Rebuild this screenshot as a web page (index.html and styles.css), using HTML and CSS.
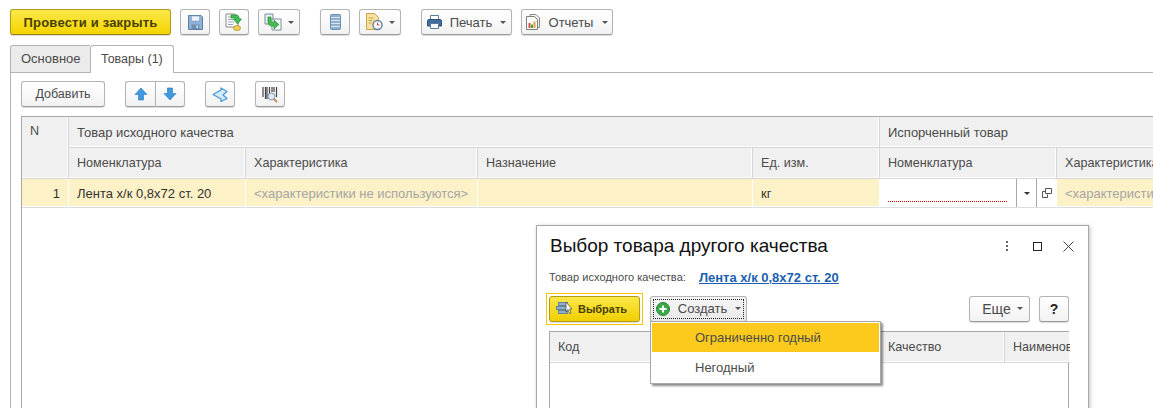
FILE: index.html
```html
<!DOCTYPE html>
<html lang="ru">
<head>
    <meta charset="UTF-8">
    <title>Товары</title>
    <link rel="stylesheet" href="styles.css">
</head>
<body>

<div class="toolbar">
    <button class="btn btn-main">Провести и закрыть</button>
    <button class="btn btn-icon">
        <svg width="15" height="15" viewBox="0 0 15 15"><path d="M.5.500h12.500l1.500 1.500v12.500H.5z" fill="#8db3dc" stroke="#5c7fa3"/><path d="M3.500 1h8v5h-8z" fill="#eef3f8" stroke="#7c9abb" stroke-width=".6"/><path d="M3.500 9.500h8V14h-8z" fill="#6e8cab"/><path d="M8.500 10.500h1.500V13H8.500z" fill="#dfe7ef"/></svg>
    </button>
    <button class="btn btn-icon">
        <svg width="18" height="18" viewBox="0 0 18 18"><path d="M1 1h9l3 3v10H1z" fill="#fff" stroke="#8a8a8a"/><path d="M3 4h5M3 6.500h6M3 9h6M3 11.500h5" stroke="#8fa3b8"/><ellipse cx="12" cy="15" rx="3.500" ry="2.500" fill="#f2cf55" stroke="#b48f20" stroke-width=".8"/><path d="M6 2h5c2 0 3 1 3 3v1h2.500L12.500 11 8.500 6H11V5H6z" fill="#3fbf55" stroke="#1f8a30" stroke-width=".7"/></svg>
    </button>
    <button class="btn btn-icon-drop">
        <svg width="18" height="18" viewBox="0 0 18 18"><path d="M1 1h8v10H1z" fill="#e9eef3" stroke="#7b8b9b"/><path d="M8 6h9v11H8z" fill="#fff" stroke="#7b8b9b"/><path d="M4 4h3v4c0 1 .5 1.500 1.500 1.500H10V7l5 4.500-5 4.500v-3H8c-2.500 0-4-1.500-4-4z" fill="#45bf55" stroke="#1f8a30" stroke-width=".7"/></svg>
        <span class="caret"></span>
    </button>
    <button class="btn btn-icon gap-left">
        <svg width="11" height="16" viewBox="0 0 11 16"><rect x=".5" y=".5" width="10" height="15" rx="1" fill="#8eb0cf" stroke="#6b8fb0"/><path d="M1 3.500h9M1 6.500h9M1 9.500h9M1 12.500h9" stroke="#dbe6f0"/></svg>
    </button>
    <button class="btn btn-icon-drop">
        <svg width="17" height="18" viewBox="0 0 17 18"><path d="M.5.500h8l4 4v12h-12z" fill="#f7e2a4" stroke="#c9a34a"/><path d="M2.500 5h5M2.500 7.500h4M2.500 10h3" stroke="#c9a34a"/><circle cx="11.500" cy="12" r="4.500" fill="#fff" stroke="#5b7fa6" stroke-width="1.400"/><path d="M11.500 9.500V12h2" fill="none" stroke="#d04040"/></svg>
        <span class="caret"></span>
    </button>
    <button class="btn btn-text btn-print gap-left">
        <svg width="15" height="14" viewBox="0 0 15 14"><path d="M3.500.5h8v4h-8z" fill="#fff" stroke="#5d7a98"/><path d="M.5 6c0-1 .5-1.500 1.500-1.500h11c1 0 1.500.5 1.500 1.500v5h-14z" fill="#3f6f9f" stroke="#2f5478"/><path d="M3.500 8.500h8v5h-8z" fill="#fff" stroke="#5d7a98"/></svg>
        <span>Печать</span>
        <span class="caret"></span>
    </button>
    <button class="btn btn-text btn-reports">
        <svg width="14" height="16" viewBox="0 0 14 16"><path d="M4 .5h6l3.500 3.500v9.500H4z" fill="#f2f2f2" stroke="#8a8a8a"/><path d="M.5 2.500h8l3 3v10h-11z" fill="#fff" stroke="#7c7c7c"/><path d="M2.500 9h2v5h-2z" fill="#d04a3c"/><path d="M5 10.500h2V14H5z" fill="#3fa34d"/><path d="M7.500 7.500h2V14h-2z" fill="#e0a030"/></svg>
        <span>Отчеты</span>
        <span class="caret"></span>
    </button>
</div>

<div class="tabs">
    <div class="tab">Основное</div>
    <div class="tab tab-active">Товары (1)</div>
    <div class="tabs-rest"></div>
</div>

<div class="panel">
    <div class="table-bar">
        <button class="btn btn-add">Добавить</button>
        <div class="btn-split">
            <button class="btn btn-icon">
                <svg width="14" height="14" viewBox="0 0 14 14"><path d="M7 1l6 6.500H9.500V13h-5V7.500H1z" fill="#3f9ae0" stroke="#2a76b5" stroke-width=".6"/></svg>
            </button>
            <button class="btn btn-icon">
                <svg width="14" height="14" viewBox="0 0 14 14"><path d="M7 13L1 6.500h3.500V1h5v5.500H13z" fill="#3f9ae0" stroke="#2a76b5" stroke-width=".6"/></svg>
            </button>
        </div>
        <button class="btn btn-icon">
            <svg width="16" height="15" viewBox="0 0 16 15"><path d="M1 7.500L9 3V1l6 3.500-4 3.500 4 3.500L9 14.500V12z" fill="#d5ebfa" stroke="#4a9ad8" stroke-width="1.300" stroke-linejoin="round"/></svg>
        </button>
        <button class="btn btn-icon">
            <svg width="16" height="17" viewBox="0 0 16 17"><path d="M1 1v10M3.500 1v12M5 1v12M7.500 1v7M10 1v5M12 1v5M14.500 1v10" stroke="#444" stroke-width="1.200"/><circle cx="9.500" cy="10.500" r="3.500" fill="#dfeaf5" stroke="#7f93a8"/><path d="M12 13l3 3" stroke="#c09050" stroke-width="1.800"/></svg>
        </button>
    </div>

    <div class="table-wrap">
        <div class="grid-table">
            <div class="head head-n">N</div>
            <div class="head head-group head-group-left">Товар исходного качества</div>
            <div class="head head-group head-group-right">Испорченный товар</div>
            <div class="head">Номенклатура</div>
            <div class="head">Характеристика</div>
            <div class="head">Назначение</div>
            <div class="head">Ед. изм.</div>
            <div class="head">Номенклатура</div>
            <div class="head head-last">Характеристика</div>

            <div class="cell cell-n">1</div>
            <div class="cell">Лента х/к 0,8х72 ст. 20</div>
            <div class="cell cell-muted">&lt;характеристики не используются&gt;</div>
            <div class="cell"></div>
            <div class="cell">кг</div>
            <div class="cell cell-edit">
                <div class="edit-input"><span class="edit-line"></span></div>
                <div class="edit-btn"><span class="caret caret-dark"></span></div>
                <div class="edit-btn">
                    <svg width="10" height="10" viewBox="0 0 10 10"><path d="M3.500.5h6v5h-6z" fill="none" stroke="#555"/><path d="M3.500 3.500h-3v6h5v-3" fill="none" stroke="#555"/></svg>
                </div>
            </div>
            <div class="cell cell-muted cell-last">&lt;характеристики не используются&gt;</div>
        </div>
    </div>
</div>

<div class="dialog">
    <div class="dialog-head">
        <div class="dialog-title">Выбор товара другого качества</div>
        <div class="dialog-controls">
            <span class="dots"></span>
            <span class="square"></span>
            <svg width="11" height="11" viewBox="0 0 11 11"><path d="M.5.500l10 10M10.500.500l-10 10" stroke="#444"/></svg>
        </div>
    </div>
    <div class="dialog-info">
        <span class="info-label">Товар исходного качества:</span>
        <a class="info-link">Лента х/к 0,8х72 ст. 20</a>
    </div>
    <div class="dialog-bar">
        <div class="focus-box">
            <button class="btn btn-choose">
                <svg width="18" height="17" viewBox="0 0 18 17"><rect x="2.500" y="2.500" width="9" height="3" fill="#8eb0cf" stroke="#50759a" stroke-width=".8"/><rect x=".5" y="6.500" width="11" height="3" fill="#8eb0cf" stroke="#50759a" stroke-width=".8"/><rect x="2.500" y="10.500" width="9" height="3" fill="#8eb0cf" stroke="#50759a" stroke-width=".8"/><path d="M10 2l6 7h-2.500l1.500 4-1.500.6-1.500-4L10 12z" fill="#fff" stroke="#444" stroke-width=".7"/></svg>
                <span>Выбрать</span>
            </button>
        </div>
        <button class="btn btn-create">
            <span class="create-focus">
                <svg width="14" height="14" viewBox="0 0 14 14"><circle cx="7" cy="7" r="6.500" fill="#3aa845" stroke="#26853a"/><path d="M7 3.500v7M3.500 7h7" stroke="#fff" stroke-width="2"/></svg>
                <span>Создать</span>
                <span class="caret"></span>
            </span>
        </button>
        <button class="btn btn-more">
            <span>Еще</span>
            <span class="caret"></span>
        </button>
        <button class="btn btn-help">?</button>
    </div>
    <div class="dialog-table">
        <div class="head">Код</div>
        <div class="head">Качество</div>
        <div class="head head-last">Наименование</div>
    </div>
    <div class="menu">
        <div class="menu-item menu-item-active">Ограниченно годный</div>
        <div class="menu-item">Негодный</div>
    </div>
</div>

</body>
</html>
```

FILE: styles.css
```css
html, body {
    height: 100%;
}

body {
    margin: 0;
    position: relative;
    overflow: hidden;
    background: #fff;
    font-family: "Liberation Sans", Arial, sans-serif;
    font-size: 13px;
    color: #4b4b4b;
}

/* кнопки */
.btn {
    display: flex;
    align-items: center;
    justify-content: center;
    height: 26px;
    padding: 0;
    box-sizing: border-box;
    font: inherit;
    color: #4b4b4b;
    background: linear-gradient(#ffffff, #f2f2f2);
    border: 1px solid #b4b4b4;
    border-bottom-color: #9c9c9c;
    border-radius: 3px;
    box-shadow: 0 1px 1px rgba(0, 0, 0, 0.15);
}

.btn-icon {
    width: 30px;
}

.btn-icon-drop {
    width: 42px;
    gap: 6px;
}

.btn-text {
    gap: 8px;
}

.btn-print {
    width: 91px;
}

.btn-reports {
    width: 92px;
    gap: 9px;
}

.caret {
    width: 0;
    height: 0;
    border-left: 3px solid transparent;
    border-right: 3px solid transparent;
    border-top: 3px solid #555;
}

.caret-dark {
    border-top-color: #333;
}

.toolbar {
    display: flex;
    align-items: center;
    gap: 9px;
    padding: 9px 0 0 10px;
    height: 26px;
}

.btn-main {
    width: 161px;
    font-weight: bold;
    letter-spacing: 0.2px;
    color: #4a4000;
    background: linear-gradient(#fbe84a, #f5d400);
    border-color: #b09a1c;
    border-bottom-color: #96820f;
}

.gap-left {
    margin-left: 11px;
}

/* вкладки */
.tabs {
    display: flex;
    margin: 10px 0 0 10px;
    height: 28px;
    box-sizing: border-box;
}

.tab {
    padding: 0 10px;
    width: 80px;
    box-sizing: border-box;
    line-height: 26px;
    background: #ebebeb;
    border: 1px solid #b4b4b4;
    border-right: none;
    border-radius: 3px 0 0 0;
}

.tab-active {
    width: 84px;
    font-size: 12.500px;
    background: #fff;
    border-right: 1px solid #b4b4b4;
    border-bottom: none;
    border-radius: 3px 3px 0 0;
}

.tabs-rest {
    flex: 1;
    border-bottom: 1px solid #b4b4b4;
}

.panel {
    margin-left: 10px;
    padding: 8px 0 0 10px;
    height: 335px;
    box-sizing: border-box;
    border-left: 1px solid #b4b4b4;
}

.table-bar {
    display: flex;
    align-items: center;
    gap: 20px;
    height: 26px;
}

.btn-add {
    width: 84px;
    font-size: 12.500px;
}

.btn-split {
    display: flex;
}

.btn-split .btn:first-child {
    border-radius: 3px 0 0 3px;
    border-right: none;
}

.btn-split .btn:last-child {
    border-radius: 0 3px 3px 0;
}

/* таблица */
.table-wrap {
    margin-top: 9px;
    height: 300px;
    border-left: 1px solid #a8a8a8;
    border-top: 1px solid #a8a8a8;
}

.grid-table {
    display: grid;
    grid-template-columns: 47px 177px 232px 275px 127px 177px 200px;
    grid-template-rows: 31px 31px 29px;
}

.head {
    display: flex;
    align-items: center;
    padding-left: 8px;
    box-sizing: border-box;
    font-size: 12.600px;
    background: #f0f0f0;
    white-space: nowrap;
    overflow: hidden;
    border-right: 1px solid #d6d6d6;
    border-bottom: 1px solid #d6d6d6;
    box-shadow: inset -1px -1px 0 #fff;
}

.head-group {
    font-size: 13px;
}

.head-n {
    grid-row: 1 / span 2;
    align-items: flex-start;
    padding-top: 7px;
}

.head-group-left {
    grid-column: 2 / span 4;
}

.head-group-right {
    grid-column: 6 / span 2;
}

.head-last {
    border-right: none;
}

.cell {
    display: flex;
    align-items: center;
    padding-left: 8px;
    box-sizing: border-box;
    color: #333;
    background: #fdf1c7;
    white-space: nowrap;
    overflow: hidden;
    border-right: 1px solid #fff;
    border-bottom: 1px solid #dcdcdc;
    box-shadow: inset 0 -1px 0 #fff;
}

.cell-n {
    justify-content: flex-end;
    padding: 0 8px 0 0;
}

.cell-muted {
    color: #a5a5a5;
}

.cell-edit {
    padding: 0;
    background: #fff;
}

.edit-input {
    flex: 1;
    height: 100%;
    display: flex;
    align-items: flex-end;
    padding: 0 9px 5px 8px;
    box-sizing: border-box;
}

.edit-line {
    flex: 1;
    border-bottom: 1px dotted #e00000;
}

.edit-btn {
    display: flex;
    align-items: center;
    justify-content: center;
    width: 20px;
    height: 100%;
    box-sizing: border-box;
    border-left: 1px solid #a8a8a8;
}

/* окно выбора */
.dialog {
    position: absolute;
    left: 536px;
    top: 225px;
    width: 553px;
    height: 240px;
    box-sizing: border-box;
    background: #fff;
    border: 1px solid #a8a8a8;
    box-shadow: 1px 1px 4px rgba(0, 0, 0, 0.25);
}

.dialog-head {
    display: flex;
    align-items: center;
    justify-content: space-between;
    padding: 8px 14px 0 13px;
    height: 24px;
}

.dialog-title {
    font-size: 19px;
    color: #111;
}

.dialog-controls {
    display: flex;
    align-items: center;
    gap: 21px;
}

.dots {
    width: 2px;
    height: 2px;
    margin-right: 4px;
    background: #666;
    box-shadow: 0 -4px 0 #666, 0 4px 0 #666;
}

.square {
    width: 7px;
    height: 7px;
    border: 1px solid #222;
}

.dialog-info {
    display: flex;
    align-items: center;
    gap: 13px;
    margin-top: 11px;
    padding-left: 12px;
    height: 16px;
}

.info-label {
    font-size: 11px;
    letter-spacing: 0.05px;
}

.info-link {
    font-weight: bold;
    color: #1c5fb0;
    text-decoration: underline;
}

.dialog-bar {
    display: flex;
    align-items: center;
    margin-top: 7px;
    padding-left: 9px;
    height: 33px;
}

.focus-box {
    padding: 2px;
    border: 1px solid #f5c800;
}

.btn-choose {
    width: 91px;
    gap: 4px;
    padding-right: 6px;
    font-size: 11px;
    font-weight: bold;
    color: #4a4000;
    background: linear-gradient(#fbe84a, #f0cf00);
    border-color: #b09a1c;
}

.btn-create {
    width: 97px;
    margin-left: 7px;
    padding: 2px;
    background: linear-gradient(#f6f6f6, #e8e8e8);
}

.create-focus {
    display: flex;
    align-items: center;
    justify-content: center;
    gap: 8px;
    width: 100%;
    height: 100%;
    border: 1px dotted #222;
    box-sizing: border-box;
}

.btn-more {
    width: 61px;
    margin-left: auto;
    padding-left: 6px;
    gap: 6px;
    font-size: 14px;
}

.btn-help {
    width: 30px;
    margin: 0 19px 0 9px;
    font-size: 14px;
    font-weight: bold;
    color: #222;
}

.dialog-table {
    display: grid;
    grid-template-columns: 330px 125px 65px;
    grid-template-rows: 31px;
    margin: 6px 0 0 12px;
    height: 110px;
    width: 520px;
    box-sizing: border-box;
    border: 1px solid #a8a8a8;
}

.menu {
    position: absolute;
    left: 113px;
    top: 95px;
    width: 231px;
    padding: 1px;
    box-sizing: border-box;
    background: #fff;
    border: 1px solid #a8a8a8;
    box-shadow: 2px 2px 2px rgba(0, 0, 0, 0.45);
}

.menu-item {
    display: flex;
    align-items: center;
    height: 30px;
    padding-left: 43px;
}

.menu-item-active {
    height: 29px;
    background: #fbca1c;
}
```
